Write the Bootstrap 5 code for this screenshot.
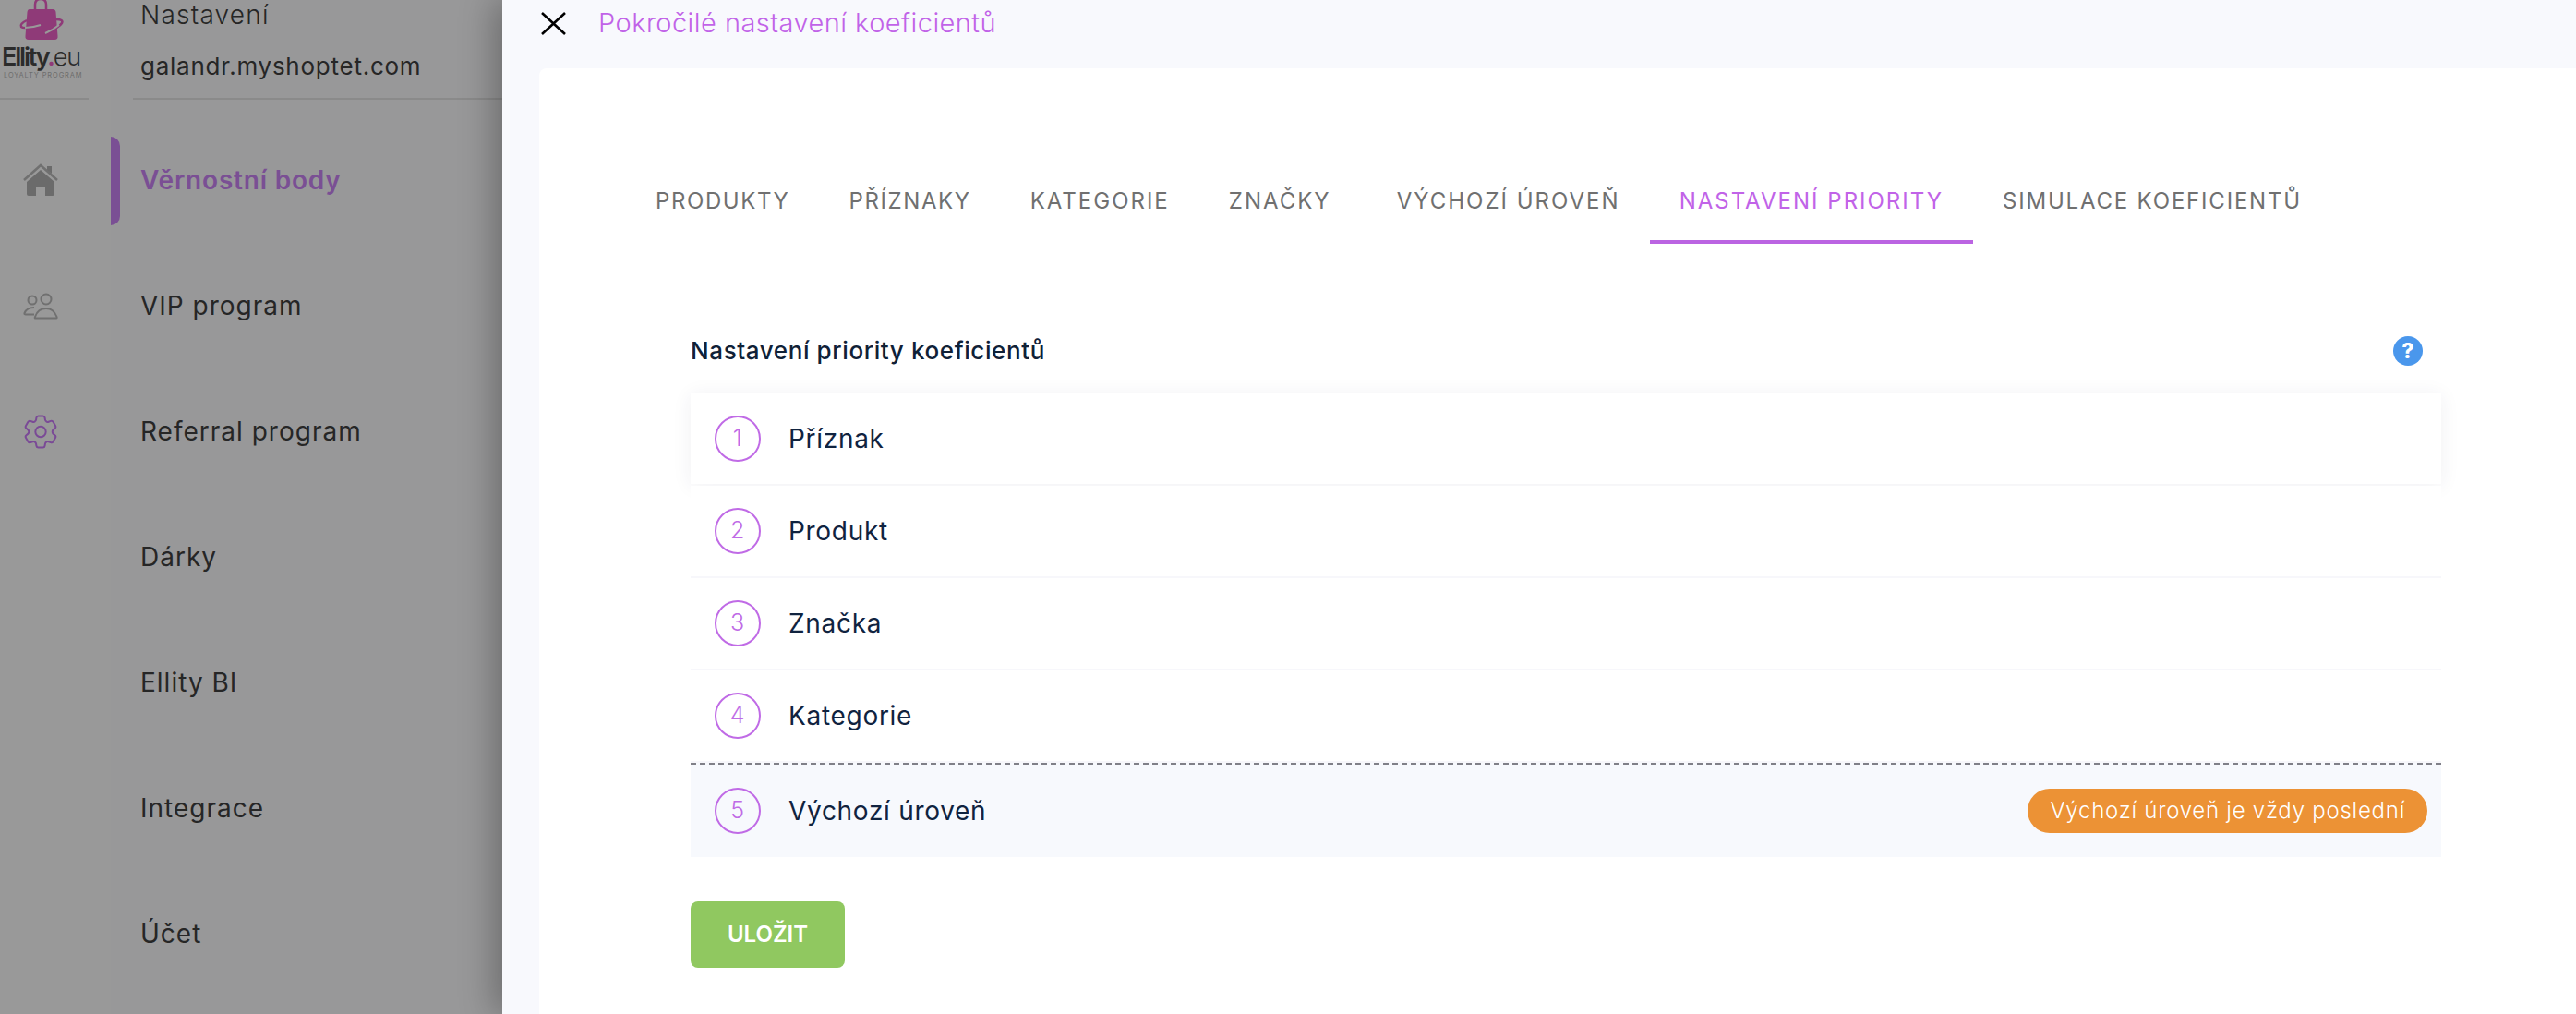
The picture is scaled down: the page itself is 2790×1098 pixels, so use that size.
<!DOCTYPE html>
<html lang="cs">
<head>
    <meta charset="UTF-8">
    <meta name="viewport" content="width=device-width, initial-scale=1.0">
    <title>Pokročilé nastavení koeficientů</title>
    <link href="https://cdn.jsdelivr.net/npm/bootstrap@5.3.0/dist/css/bootstrap.min.css" rel="stylesheet">
    <style>
        body {
            height: 1098px;
            overflow: hidden;
            font-family: Inter, "Liberation Sans", sans-serif;
            background: #999;
        }
        /* dimmed app behind the drawer */
        .app-rail { width: 120px; flex: none; background: #999; }
        .rail-logo { width: 96px; height: 108px; border-bottom: 2px solid #8a8a8a; overflow: hidden; }
        .logo-bag { display: block; margin-left: 20px; }
        .logo-word { font-size: 27px; line-height: 24px; letter-spacing: -2.2px; color: #2b2b2b; font-weight: 600; padding-left: 2px; margin-top: 5px; white-space: nowrap; }
        .logo-word span { font-weight: 300; letter-spacing: -1px; }
        .logo-word i { color: #8f3a78; font-style: normal; }
        .logo-sub { font-size: 7.5px; line-height: 10px; letter-spacing: .85px; color: #6d6d6d; padding-left: 4px; margin-top: 3px; white-space: nowrap; }
        .rail-icons { padding-top: 19px; }
        .rail-item { height: 136px; width: 88px; }

        .app-menu { width: 424px; flex: none; background: #989899; position: relative; }
        .menu-head { height: 108px; margin-left: 24px; border-bottom: 2px solid #8a8a8a; padding-left: 8px; color: #262626; }
        .menu-title { font-size: 28px; line-height: 32px; font-weight: 300; letter-spacing: 1.2px; }
        .menu-shop { font-size: 26px; line-height: 32px; margin-top: 24px; font-weight: 400; letter-spacing: .75px; }
        .menu-list { padding-top: 19px; }
        .menu-row { height: 136px; padding-left: 32px; font-size: 28px; letter-spacing: 1px; color: #262626; font-weight: 400; }
        .menu-row.is-on { color: #7a4f94; font-weight: 600; letter-spacing: .8px; position: relative; }
        .menu-row.is-on::before {
            content: "";
            position: absolute;
            left: 0;
            top: 21px;
            width: 10px;
            height: 96px;
            background: #7a4f94;
            border-radius: 0 10px 10px 0;
        }

        /* drawer */
        .drawer { flex: 1; background: #f8f9fd; padding: 0 0 0 40px; box-shadow: -8px 0 36px rgba(0, 0, 0, .3); position: relative; }
        .drawer-top { height: 74px; }
        .drawer-top svg { margin-top: 13px; margin-left: 2px; margin-right: 35px; }
        .drawer-title { color: #c163e8; font-size: 29px; line-height: 50px; font-weight: 300; letter-spacing: .45px; }
        .drawer-card { background: #fff; border-radius: 8px 0 0 0; height: 1024px; padding: 0 146px 0 94px; }

        .coef-tabs { padding-top: 106px; margin-left: 0; border: 0; flex-wrap: nowrap; }
        .coef-tabs .nav-link {
            font-size: 24px;
            line-height: 36px;
            letter-spacing: 2px;
            color: #707070;
            padding: 20px 32px 24px;
            border: 0;
            border-bottom: 4px solid transparent;
            border-radius: 0;
            white-space: nowrap;
            font-weight: 400;
        }
        .coef-tabs .tab-tight { letter-spacing: 1.6px; }
        .coef-tabs .tab-last { letter-spacing: 1.8px; }
        .coef-tabs .tab-after { margin-left: 7px; }
        .coef-tabs .nav-link.active { color: #c163e8; border-bottom-color: #bb64e2; background: transparent; }

        .coef-block { margin-left: 70px; margin-top: 91px; }
        .coef-head { height: 71px; padding-bottom: 21px; }
        .coef-head h2 { font-size: 26px; line-height: 38px; font-weight: 500; color: #0f2137; margin: 0; letter-spacing: .6px; }
        .help-dot { width: 32px; height: 32px; background: #4a97ec; color: #fff; font-size: 23px; line-height: 32px; font-weight: 800; text-align: center; margin-right: 20px; }

        .coef-list .list-group-item {
            height: 100px;
            padding: 0 15px 0 26px;
            border: 0;
            border-bottom: 2px solid #f7f7fb;
            border-radius: 0;
            background: #fff;
            color: #10233f;
            font-size: 28px;
            letter-spacing: .7px;
            gap: 30px;
        }
        .coef-list .coef-first { height: 98px; margin-bottom: 2px; border-bottom: 0; box-shadow: 0 2px 20px rgba(40, 40, 90, .07); position: relative; }
        .coef-list .coef-last { height: 102px; background: #f7f9fd; border-top: 2px dashed #808088; border-bottom: 0; }
        .coef-num { width: 50px; height: 50px; border: 2px solid #c06be6; color: #c06be6; font-size: 25px; font-weight: 300; flex: none; }
        .coef-pill { background: #ec9235; font-size: 24px; letter-spacing: .75px; line-height: 48px; height: 48px; padding: 0 24px; font-weight: 300; color: #fff; }
        .btn-save { margin-top: 48px; width: 167px; height: 72px; background: #90c860; border: 0; border-radius: 8px; color: #fff; font-size: 24px; font-weight: 600; }
        .btn-save:hover { background: #90c860; color: #fff; }
    </style>
</head>
<body class="d-flex">
    <!-- Icon rail -->
    <div class="app-rail">
        <div class="rail-logo">
            <svg class="logo-bag" width="50" height="45" viewBox="20 0 50 45">
                <path d="M38 11 V5 Q38 -1 44 -1 Q50 -1 50 5 V11" fill="none" stroke="#8f3a78" stroke-width="2.5"/>
                <path d="M32 10 H57 Q60 10 60.500 13 L62.500 39 Q63 43 59 43 H31 Q27 43 27.500 39 L29.500 13 Q30 10 32 10 Z" fill="#8f3a78"/>
                <path d="M29 22 Q21 26 23 29 Q26 32 44 27" fill="none" stroke="#8f3a78" stroke-width="2.500"/>
                <path d="M61 21 Q69 21 67 25 Q64 30 50 35" fill="none" stroke="#8f3a78" stroke-width="2.500"/>
                <path d="M27 30 Q35 30 44 27 M49 36 Q58 32 64 27" fill="none" stroke="#999" stroke-width="2"/>
            </svg>
            <div class="logo-word">Ellity<i>.</i><span>eu</span></div>
            <div class="logo-sub">LOYALTY PROGRAM</div>
        </div>
        <div class="rail-icons">
            <div class="rail-item d-flex align-items-center justify-content-center">
                <svg width="38" height="36" viewBox="0 0 38 36">
                    <path d="M1 18 L19 2 L37 18" fill="none" stroke="#707070" stroke-width="2.500"/>
                    <path d="M26 3 H31 V11 L26 7 Z" fill="#6b6b6b"/>
                    <path d="M4 20 L19 7 L34 20 V33 Q34 35 32 35 H24 V25 H14 V35 H6 Q4 35 4 33 Z" fill="#6b6b6b"/>
                </svg>
            </div>
            <div class="rail-item d-flex align-items-center justify-content-center">
                <svg width="38" height="29" viewBox="0 0 38 29">
                    <g fill="none" stroke="#707070" stroke-width="2">
                        <circle cx="10" cy="8" r="4.500"/>
                        <circle cx="25" cy="7" r="5.500"/>
                        <path d="M13 27.500 H36 Q37 27.500 36.500 26 Q33 17 25 17 Q16 17 13 26 Q12.500 27.500 13 27.500 Z"/>
                        <path d="M12 23.500 H3 Q1 23.500 1.500 22 Q4 16 12 16"/>
                    </g>
                </svg>
            </div>
            <div class="rail-item d-flex align-items-center justify-content-center">
                <svg width="36" height="37" viewBox="2.500 2.500 19 19">
                    <g fill="none" stroke="#7a4a96" stroke-width="1.050">
                        <path d="M9.594 3.94c.09-.542.56-.94 1.11-.94h2.593c.55 0 1.02.398 1.11.94l.213 1.281c.063.374.313.686.645.87.074.04.147.083.22.127.325.196.72.257 1.075.124l1.217-.456a1.125 1.125 0 0 1 1.37.49l1.296 2.247a1.125 1.125 0 0 1-.26 1.431l-1.003.827c-.293.241-.438.613-.43.992a7.723 7.723 0 0 1 0 .255c-.008.378.137.75.43.991l1.004.827c.424.35.534.955.26 1.43l-1.298 2.247a1.125 1.125 0 0 1-1.369.491l-1.217-.456c-.355-.133-.75-.072-1.076.124a6.47 6.47 0 0 1-.22.128c-.331.183-.581.495-.644.869l-.213 1.281c-.09.543-.56.94-1.11.94h-2.594c-.55 0-1.019-.398-1.11-.94l-.213-1.281c-.062-.374-.312-.686-.644-.87a6.52 6.52 0 0 1-.22-.127c-.325-.196-.72-.257-1.076-.124l-1.217.456a1.125 1.125 0 0 1-1.369-.49l-1.297-2.247a1.125 1.125 0 0 1 .26-1.431l1.004-.827c.292-.24.437-.613.43-.991a6.932 6.932 0 0 1 0-.255c.007-.38-.138-.751-.43-.992l-1.004-.827a1.125 1.125 0 0 1-.26-1.43l1.297-2.247a1.125 1.125 0 0 1 1.37-.491l1.216.456c.356.133.751.072 1.076-.124.072-.044.146-.086.22-.128.332-.183.582-.495.644-.869l.214-1.28Z"/>
                        <circle cx="12" cy="12" r="3"/>
                    </g>
                </svg>
            </div>
        </div>
    </div>

    <!-- Menu column -->
    <div class="app-menu">
        <div class="menu-head">
            <div class="menu-title">Nastavení</div>
            <div class="menu-shop">galandr.myshoptet.com</div>
        </div>
        <div class="menu-list">
            <div class="menu-row is-on d-flex align-items-center">Věrnostní body</div>
            <div class="menu-row d-flex align-items-center">VIP program</div>
            <div class="menu-row d-flex align-items-center">Referral program</div>
            <div class="menu-row d-flex align-items-center">Dárky</div>
            <div class="menu-row d-flex align-items-center">Ellity BI</div>
            <div class="menu-row d-flex align-items-center">Integrace</div>
            <div class="menu-row d-flex align-items-center">Účet</div>
        </div>
    </div>

    <!-- Drawer -->
    <div class="drawer">
        <div class="drawer-top d-flex align-items-start">
            <svg width="27" height="25" viewBox="0 0 27 25">
                <path d="M1 1 L26 24 M26 1 L1 24" stroke="#000" stroke-width="2.600" fill="none"/>
            </svg>
            <div class="drawer-title">Pokročilé nastavení koeficientů</div>
        </div>
        <div class="drawer-card">
            <ul class="nav coef-tabs">
                <li class="nav-item"><a class="nav-link tab-tight" href="#">PRODUKTY</a></li>
                <li class="nav-item"><a class="nav-link tab-tight" href="#">PŘÍZNAKY</a></li>
                <li class="nav-item"><a class="nav-link" href="#">KATEGORIE</a></li>
                <li class="nav-item"><a class="nav-link" href="#">ZNAČKY</a></li>
                <li class="nav-item tab-after"><a class="nav-link" href="#">VÝCHOZÍ ÚROVEŇ</a></li>
                <li class="nav-item"><a class="nav-link active" href="#">NASTAVENÍ PRIORITY</a></li>
                <li class="nav-item"><a class="nav-link tab-last" href="#">SIMULACE KOEFICIENTŮ</a></li>
            </ul>
            <div class="coef-block">
                <div class="coef-head d-flex justify-content-between align-items-center">
                    <h2>Nastavení priority koeficientů</h2>
                    <span class="help-dot rounded-circle">?</span>
                </div>
                <div class="list-group coef-list">
                    <div class="list-group-item coef-first d-flex align-items-center">
                        <span class="coef-num rounded-circle d-flex align-items-center justify-content-center">1</span>Příznak
                    </div>
                    <div class="list-group-item d-flex align-items-center">
                        <span class="coef-num rounded-circle d-flex align-items-center justify-content-center">2</span>Produkt
                    </div>
                    <div class="list-group-item d-flex align-items-center">
                        <span class="coef-num rounded-circle d-flex align-items-center justify-content-center">3</span>Značka
                    </div>
                    <div class="list-group-item d-flex align-items-center">
                        <span class="coef-num rounded-circle d-flex align-items-center justify-content-center">4</span>Kategorie
                    </div>
                    <div class="list-group-item coef-last d-flex align-items-center">
                        <span class="coef-num rounded-circle d-flex align-items-center justify-content-center">5</span>Výchozí úroveň
                        <span class="badge rounded-pill coef-pill ms-auto me-0">Výchozí úroveň je vždy poslední</span>
                    </div>
                </div>
                <button type="button" class="btn btn-save">ULOŽIT</button>
            </div>
        </div>
    </div>

    <script src="https://cdn.jsdelivr.net/npm/bootstrap@5.3.0/dist/js/bootstrap.bundle.min.js"></script>
</body>
</html>
